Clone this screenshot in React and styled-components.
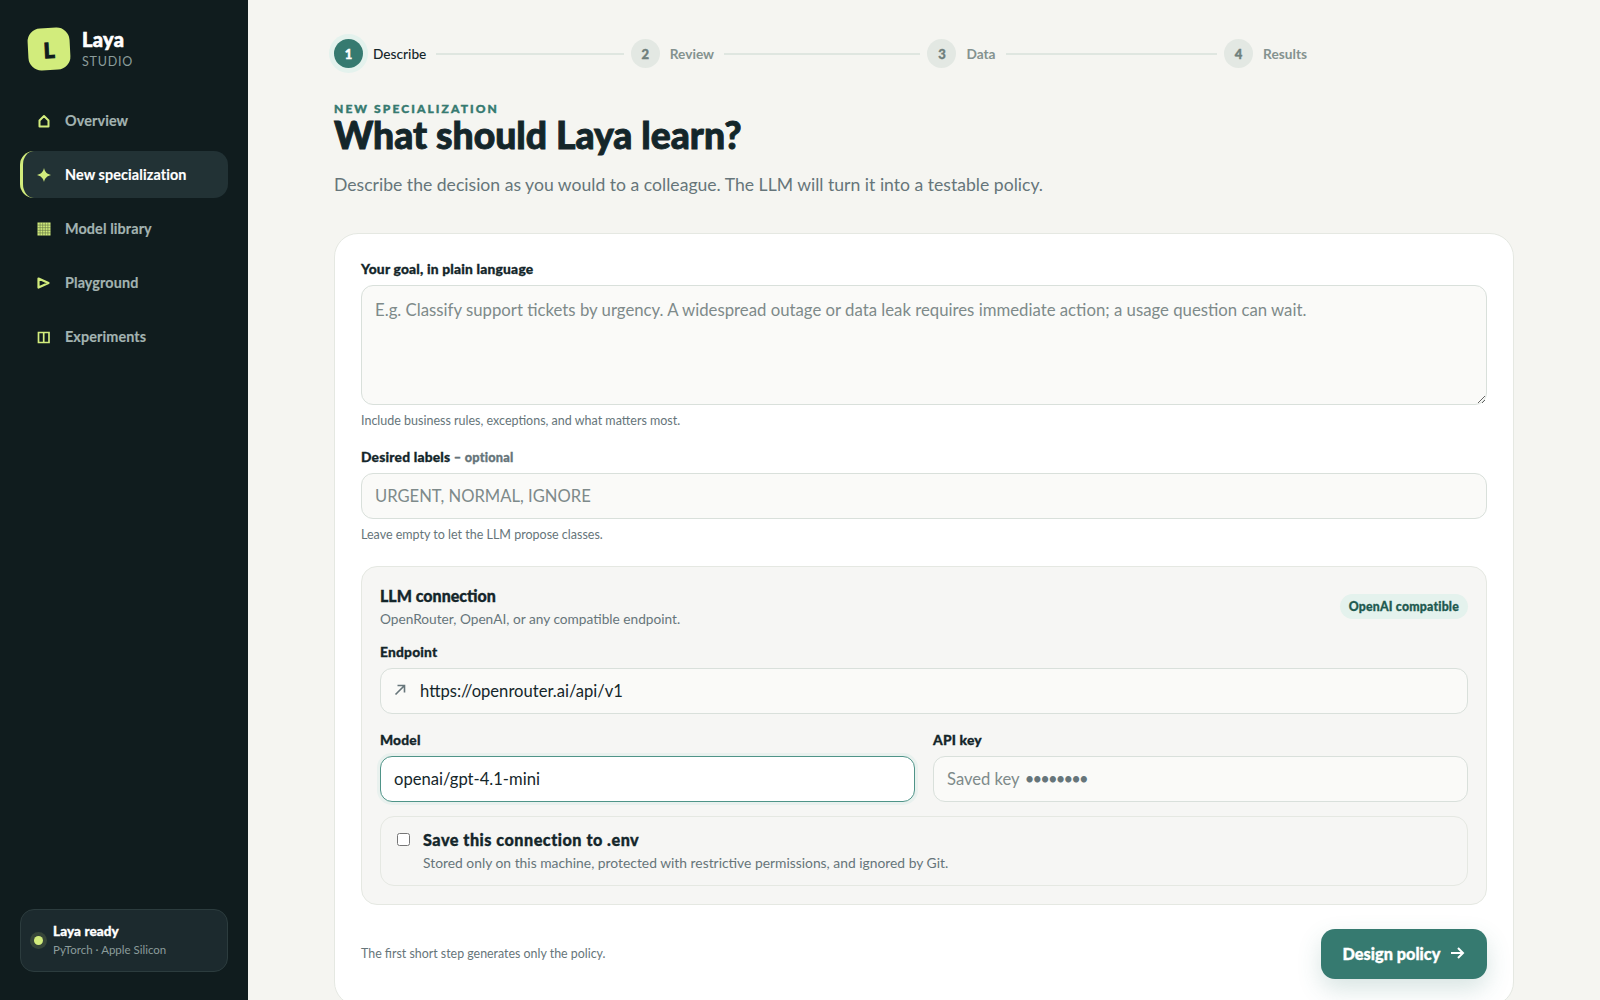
import styled, { createGlobalStyle, css } from "styled-components";

const GlobalStyle = createGlobalStyle`
  * { box-sizing: border-box; }
  html, body { margin: 0; height: 100%; overflow: hidden; }
  body {
    background: #f5f5f1;
    color: #14262a;
    font-family: "Lato", "Open Sans", sans-serif;
  }
`;

/* Lato tops out lighter than the reference, so thicken it a bit */
const heavy = (width = 0.3) => css`
  font-weight: 900;
  -webkit-text-stroke: ${width}px currentColor;
`;

const fieldBox = css`
  display: block;
  width: 100%;
  height: 46px;
  border: 1px solid #d9e0db;
  border-radius: 12px;
  outline: none;
  background: #fafaf8;
  color: #14262a;
  font: 400 16.6px "Lato", sans-serif;
`;

const Shell = styled.div`
  display: flex;
  height: 100vh;
`;

const Sidebar = styled.aside`
  flex: 0 0 248px;
  display: flex;
  flex-direction: column;
  padding: 28px 20px 28px;
  background: #101c1e;
`;

const Brand = styled.div`
  display: flex;
  align-items: center;
  gap: 12px;
  padding-left: 8px;
  margin-bottom: 27px;
`;

const LogoMark = styled.div`
  width: 42px;
  height: 42px;
  display: flex;
  align-items: center;
  justify-content: center;
  border-radius: 13px;
  background: #d2ec7c;
  color: #101c1e;
  font-size: 21px;
  ${heavy(1)}
  transform: rotate(-3deg);
`;

const BrandText = styled.div`
  display: flex;
  flex-direction: column;
`;

const BrandName = styled.span`
  color: #fff;
  font-size: 20px;
  line-height: 23px;
  letter-spacing: 0.3px;
  ${heavy(0.6)}
`;

const BrandSub = styled.span`
  margin-top: 3px;
  color: #8b9c9b;
  font-size: 12.5px;
  line-height: 16px;
  letter-spacing: 0.8px;
`;

const Nav = styled.nav`
  display: flex;
  flex-direction: column;
  gap: 7px;
  flex: 1;
`;

const NavItem = styled.a`
  height: 47px;
  display: flex;
  align-items: center;
  gap: 14px;
  padding-left: 14px;
  border-radius: 14px;
  border-left: 3px solid ${(p) => (p.$active ? "#d2ec7c" : "transparent")};
  background: ${(p) => (p.$active ? "#223235" : "transparent")};
  color: ${(p) => (p.$active ? "#fff" : "#a3b3b1")};
  font-size: 14.4px;
  font-weight: 700;
  letter-spacing: 0.1px;
  -webkit-text-stroke: 0.15px currentColor;
`;

const NavIcon = styled.svg`
  flex: 0 0 14px;
  width: 14px;
  height: 14px;
  color: #d2ec7c;
`;

const StatusCard = styled.div`
  height: 63px;
  display: flex;
  align-items: center;
  gap: 6px;
  padding-left: 9px;
  border: 1px solid #2c3c3e;
  border-radius: 14px;
  background: #1c2a2e;
`;

const StatusDot = styled.span`
  width: 9px;
  height: 9px;
  margin: 0 4px;
  border-radius: 50%;
  background: #d2ec7c;
  box-shadow: 0 0 0 4px rgba(210, 236, 124, 0.14);
`;

const StatusText = styled.div`
  display: flex;
  flex-direction: column;
  gap: 3px;
  margin-bottom: 2px;
`;

const StatusTitle = styled.span`
  color: #fff;
  font-size: 13.5px;
  line-height: 16px;
  letter-spacing: 0.1px;
  ${heavy(0.3)}
`;

const StatusSub = styled.span`
  color: #8b9c9b;
  font-size: 11.5px;
  line-height: 15px;
`;

const Main = styled.main`
  flex: 1;
  min-width: 0;
  padding: 39px 86px 0;
`;

const Stepper = styled.div`
  display: flex;
  align-items: center;
  gap: 7px;
  width: 973px;
  height: 29px;
  margin-bottom: 34px;
`;

const Step = styled.div`
  display: flex;
  align-items: center;
  gap: 10px;
  flex: ${(p) => (p.$last ? "0 0 auto" : "1")};
`;

const StepNumber = styled.span`
  flex: 0 0 29px;
  height: 29px;
  display: flex;
  align-items: center;
  justify-content: center;
  border-radius: 50%;
  background: ${(p) => (p.$active ? "#367a70" : "#e3e8e3")};
  color: ${(p) => (p.$active ? "#fff" : "#6f7f7c")};
  font-size: 13px;
  ${heavy(0.4)}
  box-shadow: ${(p) => (p.$active ? "0 0 0 5px #e4f2ed" : "none")};
`;

const StepLabel = styled.span`
  color: ${(p) => (p.$active ? "#14262a" : "#84928f")};
  font-size: 13.7px;
  font-weight: ${(p) => (p.$active ? 500 : 700)};
`;

const StepLine = styled.span`
  flex: 1;
  height: 2px;
  background: #dfe6e0;
`;

const Eyebrow = styled.div`
  color: #367a70;
  font-size: 12px;
  line-height: 14px;
  ${heavy(0.4)}
  letter-spacing: 2.1px;
`;

const Title = styled.h1`
  margin: 0 0 19px;
  color: #14262a;
  font-size: 37.3px;
  line-height: 38px;
  ${heavy(0.9)}
`;

const Lead = styled.p`
  margin: 0 0 36px;
  color: #66757a;
  font-size: 17.6px;
  line-height: 24px;
`;

const Card = styled.section`
  padding: 26px;
  border: 1px solid #e5e8e2;
  border-radius: 24px;
  background: #fff;
`;

const FieldLabel = styled.div`
  margin-bottom: 7px;
  color: #14262a;
  font-size: 13.8px;
  line-height: 18px;
  letter-spacing: 0.2px;
  ${heavy(0.3)}
`;

const Optional = styled.span`
  color: #66757a;
  font-size: 12.8px;
`;

const Textarea = styled.textarea`
  ${fieldBox}
  height: 120px;
  padding: 12px 13px;
  font-size: 16.75px;
  line-height: 24px;
  &::placeholder { color: #7e8a8a; }
`;

const InputWrap = styled.div`
  position: relative;
`;

const InputIcon = styled.svg`
  position: absolute;
  top: 15px;
  left: 13px;
  width: 14px;
  height: 14px;
  color: #66757a;
`;

const Input = styled.input`
  ${fieldBox}
  padding: 0 13px 0 ${(p) => (p.$icon ? "39px" : "13px")};
  ${(p) =>
    p.$focus &&
    css`
      border-color: #4f9488;
      background: #fff;
      box-shadow: 0 0 0 3px #e9f1ee;
    `}
  &::placeholder { color: #7e8a8a; }
`;

const MaskedField = styled.div`
  ${fieldBox}
  display: flex;
  align-items: center;
  gap: 5px;
  padding: 0 13px;
  color: #7e8a8a;
`;

const MaskDots = styled.span`
  color: #66757a;
  letter-spacing: -1.85px;
`;

const Help = styled.div`
  margin: 8px 0 19px;
  color: #66757a;
  font-size: 12.5px;
  line-height: 16px;
`;

const Panel = styled.div`
  margin-top: 23px;
  padding: 18px;
  border: 1px solid #e5e8e2;
  border-radius: 16px;
  background: #f6f6f4;
`;

const PanelHead = styled.div`
  display: flex;
  align-items: center;
  justify-content: space-between;
  margin-bottom: 15px;
`;

const PanelTitle = styled.div`
  color: #14262a;
  font-size: 16px;
  line-height: 22px;
  ${heavy(0.35)}
`;

const PanelSub = styled.div`
  margin-top: 3px;
  color: #66757a;
  font-size: 13.7px;
  line-height: 18px;
`;

const Badge = styled.span`
  height: 25px;
  display: flex;
  align-items: center;
  padding: 0 9px;
  border-radius: 13px;
  background: #e4f2ed;
  color: #1f5a50;
  font-size: 12.3px;
  letter-spacing: 0.2px;
  ${heavy(0.3)}
`;

const FieldRow = styled.div`
  display: grid;
  grid-template-columns: 1fr 1fr;
  gap: 18px;
  margin: 17px 0 14px;
`;

const SaveBox = styled.label`
  display: flex;
  gap: 13px;
  height: 70px;
  padding: 15px 16px 0;
  border: 1px solid #e5e8e2;
  border-radius: 14px;
`;

const Checkbox = styled.input`
  flex: 0 0 13px;
  width: 13px;
  height: 13px;
  margin: 1px 0 0;
`;

const SaveTitle = styled.div`
  color: #14262a;
  font-size: 16.2px;
  line-height: 16px;
  letter-spacing: 0.5px;
  ${heavy(0.35)}
`;

const SaveSub = styled.div`
  margin-top: 6px;
  color: #66757a;
  font-size: 13.85px;
  line-height: 18px;
`;

const Footer = styled.div`
  display: flex;
  align-items: center;
  justify-content: space-between;
  margin-top: 24px;
`;

const FooterNote = styled.span`
  margin-bottom: 2px;
  color: #66757a;
  font-size: 12.4px;
`;

const PrimaryButton = styled.button`
  width: 166px;
  height: 50px;
  display: flex;
  align-items: center;
  justify-content: center;
  gap: 10px;
  padding: 0 0 2px;
  border: 0;
  border-radius: 14px;
  background: #367a70;
  box-shadow: 0 10px 24px rgba(54, 122, 112, 0.2);
  color: #fff;
  font-family: "Lato", sans-serif;
  font-size: 16.3px;
  ${heavy(0.35)}
`;

const navItems = [
  { label: "Overview", icon: <path d="M2.5 12.5V6.5L7 2l4.5 4.5v6z" fill="none" stroke="currentColor" strokeWidth="2" strokeLinejoin="round" /> },
  {
    label: "New specialization",
    active: true,
    icon: <path d="M7 0C8 4 10 6 14 7 10 8 8 10 7 14 6 10 4 8 0 7 4 6 6 4 7 0z" fill="currentColor" />,
  },
  {
    label: "Model library",
    icon: (
      <>
        <rect x="0.5" y="0.5" width="13" height="13" fill="currentColor" />
        <path d="M3.1 .5v13M5.7 .5v13M8.3 .5v13M10.9 .5v13M.5 3.1h13M.5 5.7h13M.5 8.3h13M.5 10.9h13" stroke="#101c1e" strokeWidth="0.6" opacity="0.6" />
      </>
    ),
  },
  { label: "Playground", icon: <path d="M1.5 2.5 11.5 7l-10 4.5z" fill="none" stroke="currentColor" strokeWidth="2.2" strokeLinejoin="round" /> },
  {
    label: "Experiments",
    icon: <path d="M1.5 2.5H12v10H1.5zM6.7 2.5v10" fill="none" stroke="currentColor" strokeWidth="1.7" />,
  },
];

const steps = ["Describe", "Review", "Data", "Results"];

export default function App() {
  return (
    <Shell>
      <GlobalStyle />
      <Sidebar>
        <Brand>
          <LogoMark>L</LogoMark>
          <BrandText>
            <BrandName>Laya</BrandName>
            <BrandSub>STUDIO</BrandSub>
          </BrandText>
        </Brand>
        <Nav>
          {navItems.map((item) => (
            <NavItem key={item.label} $active={item.active}>
              <NavIcon viewBox="0 0 14 14">{item.icon}</NavIcon>
              {item.label}
            </NavItem>
          ))}
        </Nav>
        <StatusCard>
          <StatusDot />
          <StatusText>
            <StatusTitle>Laya ready</StatusTitle>
            <StatusSub>PyTorch · Apple Silicon</StatusSub>
          </StatusText>
        </StatusCard>
      </Sidebar>
      <Main>
        <Stepper>
          {steps.map((label, i) => (
            <Step key={label} $last={i === steps.length - 1}>
              <StepNumber $active={i === 0}>{i + 1}</StepNumber>
              <StepLabel $active={i === 0}>{label}</StepLabel>
              {i < steps.length - 1 && <StepLine />}
            </Step>
          ))}
        </Stepper>
        <Eyebrow>NEW SPECIALIZATION</Eyebrow>
        <Title>What should Laya learn?</Title>
        <Lead>Describe the decision as you would to a colleague. The LLM will turn it into a testable policy.</Lead>
        <Card>
          <FieldLabel>Your goal, in plain language</FieldLabel>
          <Textarea placeholder="E.g. Classify support tickets by urgency. A widespread outage or data leak requires immediate action; a usage question can wait." />
          <Help>Include business rules, exceptions, and what matters most.</Help>
          <FieldLabel>
            Desired labels <Optional>– optional</Optional>
          </FieldLabel>
          <Input placeholder="URGENT, NORMAL, IGNORE" />
          <Help>Leave empty to let the LLM propose classes.</Help>
          <Panel>
            <PanelHead>
              <div>
                <PanelTitle>LLM connection</PanelTitle>
                <PanelSub>OpenRouter, OpenAI, or any compatible endpoint.</PanelSub>
              </div>
              <Badge>OpenAI compatible</Badge>
            </PanelHead>
            <FieldLabel>Endpoint</FieldLabel>
            <InputWrap>
              <InputIcon viewBox="0 0 14 14" fill="none" stroke="currentColor" strokeWidth="1.6">
                <path d="M2.5 11.5 11 3M4.5 2.5h7v7" />
              </InputIcon>
              <Input $icon defaultValue="https://openrouter.ai/api/v1" />
            </InputWrap>
            <FieldRow>
              <div>
                <FieldLabel>Model</FieldLabel>
                <Input $focus defaultValue="openai/gpt-4.1-mini" />
              </div>
              <div>
                <FieldLabel>API key</FieldLabel>
                <MaskedField>
                  Saved key <MaskDots>••••••••</MaskDots>
                </MaskedField>
              </div>
            </FieldRow>
            <SaveBox>
              <Checkbox type="checkbox" />
              <div>
                <SaveTitle>Save this connection to .env</SaveTitle>
                <SaveSub>Stored only on this machine, protected with restrictive permissions, and ignored by Git.</SaveSub>
              </div>
            </SaveBox>
          </Panel>
          <Footer>
            <FooterNote>The first short step generates only the policy.</FooterNote>
            <PrimaryButton>
              Design policy
              <svg width="15" height="14" viewBox="0 0 15 14" fill="none" stroke="currentColor" strokeWidth="2">
                <path d="M1 7h12M8 2l5 5-5 5" />
              </svg>
            </PrimaryButton>
          </Footer>
        </Card>
      </Main>
    </Shell>
  );
}
